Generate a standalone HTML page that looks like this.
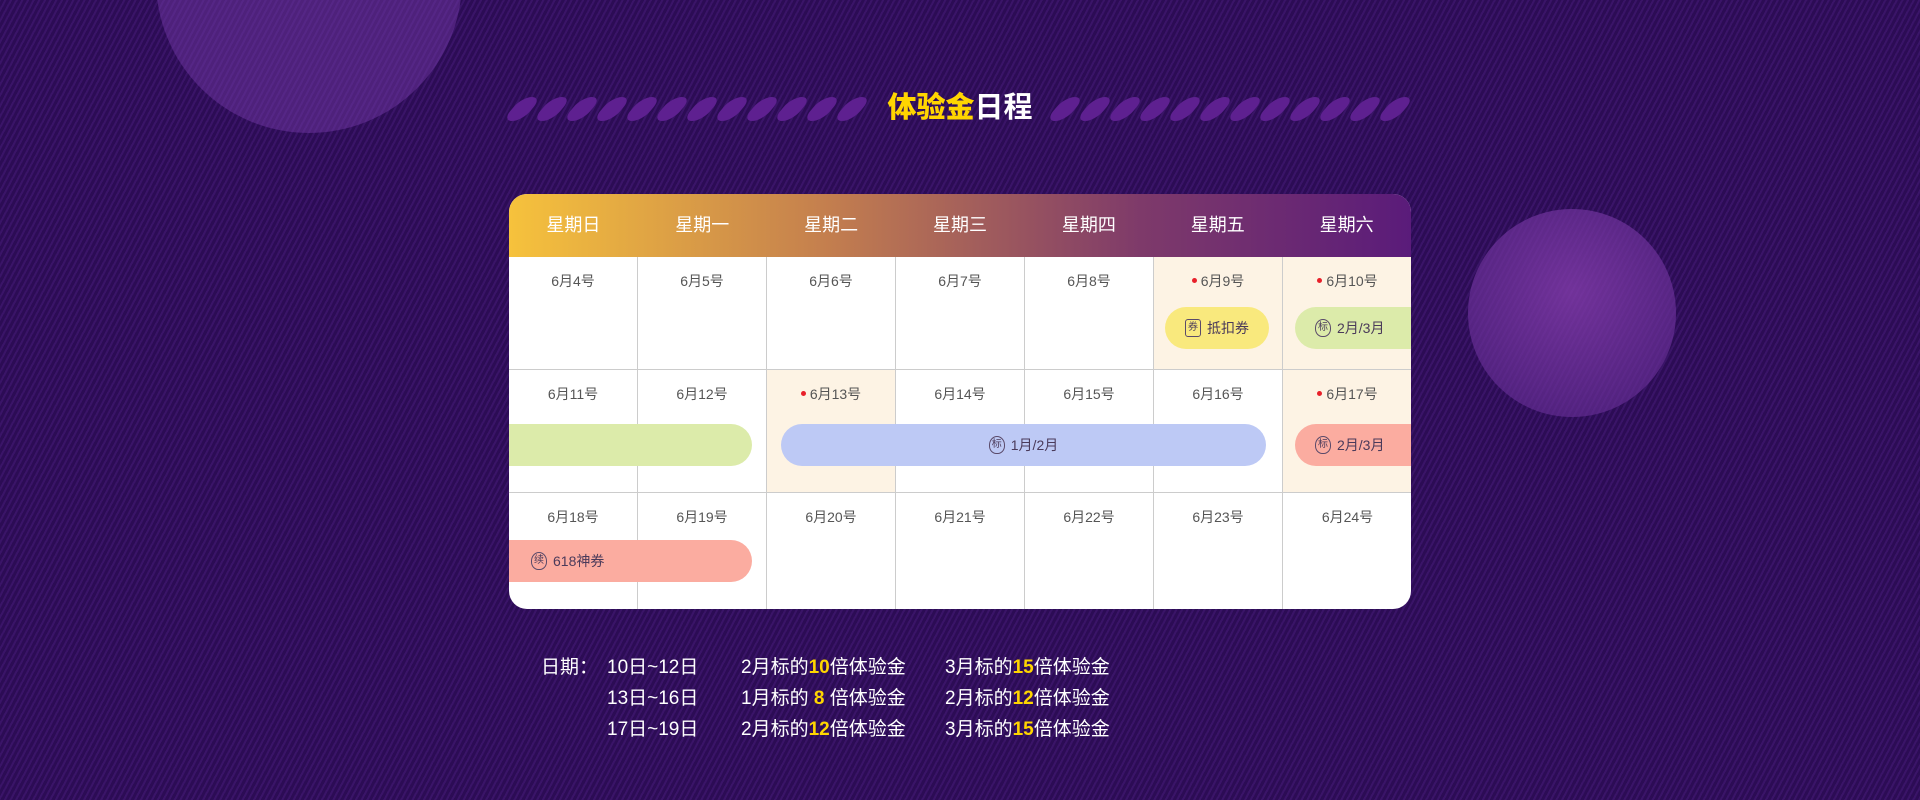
<!DOCTYPE html>
<html><head><meta charset="utf-8"><style>
*{margin:0;padding:0;box-sizing:border-box}
body{width:1920px;height:800px;overflow:hidden;position:relative;font-family:"Liberation Sans","Noto Sans CJK SC",sans-serif;
background:#33105e repeating-linear-gradient(-62deg,#3a1468 0 2px,#2c0c55 2px 5px);}
.circ{position:absolute;border-radius:50%;background:rgba(120,60,170,.45)}
.title{position:absolute;top:88px;left:0;width:1920px;text-align:center;font-size:29px;font-weight:bold;color:#fff;line-height:40px}
.title b{color:#ffd500}
.stripes{position:absolute;top:97px;height:24px;display:flex;gap:10px}
.stripes i{display:block;width:20px;height:24px;background:#5e2090;border-radius:10px;transform:skewX(-40deg)}
.card{position:absolute;left:509px;top:194px;width:902px;height:415px;border-radius:18px;overflow:hidden;background:#fff}
.head{position:absolute;left:0;top:0;width:902px;height:63px;background:linear-gradient(90deg,#f6c23c,#c47f4e 35%,#7e3a6a 70%,#5a1b7a);display:flex}
.head div{flex:1;text-align:center;color:#fff;font-size:18px;line-height:63px}
.cell{position:absolute;width:129px;border-right:1px solid #ccc;border-bottom:1px solid #ccc;text-align:center;font-size:14px;color:#555;padding-top:14px}
.cell.h{background:#fdf3e4}
.dot{display:inline-block;width:5px;height:5px;border-radius:50%;background:#e8202a;margin-right:4px;vertical-align:3px}
.pill{position:absolute;height:42px;border-radius:21px;font-size:14px;color:#4a3a5a;display:flex;align-items:center;justify-content:center;gap:6px}
.ic{display:inline-block;width:16px;height:18px;border:1.5px solid #5a4a6a;border-radius:50% 50% 45% 45%;font-size:10px;line-height:15px;text-align:center}
.info{position:absolute;color:#fff;font-size:19px;line-height:31px}
.info b{color:#ffd500}
.info span{position:absolute;white-space:nowrap}
</style></head><body>
<div class="circ" style="left:156px;top:-173px;width:306px;height:306px"></div>
<div class="circ" style="left:1468px;top:209px;width:208px;height:208px;background:radial-gradient(circle at 50% 40%,rgba(130,60,170,.8),rgba(90,40,140,.6))"></div>
<div class="stripes" style="left:512px"><i></i><i></i><i></i><i></i><i></i><i></i><i></i><i></i><i></i><i></i><i></i><i></i></div>
<div class="stripes" style="left:1055px"><i></i><i></i><i></i><i></i><i></i><i></i><i></i><i></i><i></i><i></i><i></i><i></i></div>
<div class="title"><b>体验金</b>日程</div>
<div class="card">
<div class="head"><div>星期日</div><div>星期一</div><div>星期二</div><div>星期三</div><div>星期四</div><div>星期五</div><div>星期六</div></div>
<div class="cell" style="left:0;top:63px;height:113px">6月4号</div>
<div class="cell" style="left:129px;top:63px;height:113px">6月5号</div>
<div class="cell" style="left:258px;top:63px;height:113px">6月6号</div>
<div class="cell" style="left:387px;top:63px;height:113px">6月7号</div>
<div class="cell" style="left:516px;top:63px;height:113px">6月8号</div>
<div class="cell h" style="left:645px;top:63px;height:113px"><span class="dot"></span>6月9号</div>
<div class="cell h" style="left:774px;top:63px;height:113px;width:130px"><span class="dot"></span>6月10号</div>
<div class="cell" style="left:0;top:176px;height:123px">6月11号</div>
<div class="cell" style="left:129px;top:176px;height:123px">6月12号</div>
<div class="cell h" style="left:258px;top:176px;height:123px"><span class="dot"></span>6月13号</div>
<div class="cell" style="left:387px;top:176px;height:123px">6月14号</div>
<div class="cell" style="left:516px;top:176px;height:123px">6月15号</div>
<div class="cell" style="left:645px;top:176px;height:123px">6月16号</div>
<div class="cell h" style="left:774px;top:176px;height:123px;width:130px"><span class="dot"></span>6月17号</div>
<div class="cell" style="left:0;top:299px;height:130px">6月18号</div>
<div class="cell" style="left:129px;top:299px;height:130px">6月19号</div>
<div class="cell" style="left:258px;top:299px;height:130px">6月20号</div>
<div class="cell" style="left:387px;top:299px;height:130px">6月21号</div>
<div class="cell" style="left:516px;top:299px;height:130px">6月22号</div>
<div class="cell" style="left:645px;top:299px;height:130px">6月23号</div>
<div class="cell" style="left:774px;top:299px;height:130px;width:130px">6月24号</div>
<div class="pill" style="left:656px;top:113px;width:104px;background:#f9e97d"><span class="ic" style="border-radius:3px">券</span>抵扣券</div>
<div class="pill" style="left:786px;top:113px;width:140px;background:#dcebaa;justify-content:flex-start;padding-left:20px"><span class="ic">标</span>2月/3月</div>
<div class="pill" style="left:-30px;top:230px;width:273px;background:#dcebaa"></div>
<div class="pill" style="left:272px;top:230px;width:485px;background:#bdc9f5"><span class="ic">标</span>1月/2月</div>
<div class="pill" style="left:786px;top:230px;width:140px;background:#fbaca0;justify-content:flex-start;padding-left:20px"><span class="ic">标</span>2月/3月</div>
<div class="pill" style="left:-30px;top:346px;width:273px;background:#fbaca0;justify-content:flex-start;padding-left:52px"><span class="ic">续</span>618神券</div>
</div>
<div class="info" style="left:0;top:652px;width:1920px;height:100px">
<span style="left:541px;top:0">日期：</span>
<span style="left:607px;top:0">10日~12日</span><span style="left:741px;top:0">2月标的<b>10</b>倍体验金</span><span style="left:945px;top:0">3月标的<b>15</b>倍体验金</span>
<span style="left:607px;top:31px">13日~16日</span><span style="left:741px;top:31px">1月标的 <b>8</b> 倍体验金</span><span style="left:945px;top:31px">2月标的<b>12</b>倍体验金</span>
<span style="left:607px;top:62px">17日~19日</span><span style="left:741px;top:62px">2月标的<b>12</b>倍体验金</span><span style="left:945px;top:62px">3月标的<b>15</b>倍体验金</span>
</div>
</body></html>
